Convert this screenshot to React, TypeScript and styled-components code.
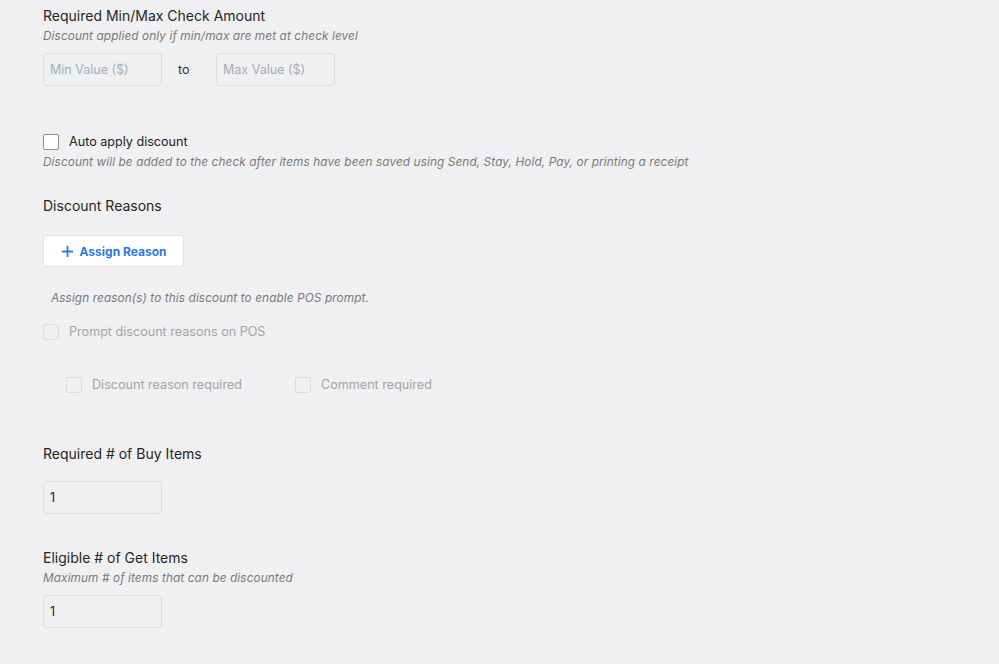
import React from 'react';
import styled, { createGlobalStyle } from 'styled-components';

const GlobalStyle = createGlobalStyle`
  html, body {
    margin: 0;
    padding: 0;
    background: #f0f0f2;
    font-family: Inter, Roboto, "Liberation Sans", Arial, sans-serif;
    color: #262626;
  }
`;

const Page = styled.div`
  padding: 6px 0 0 43px;
  min-height: 664px;
  box-sizing: border-box;
`;

const Section = styled.section<{ $gap?: number }>`
  margin-bottom: ${(p) => p.$gap ?? 0}px;
`;

const Title = styled.h3`
  margin: 0;
  font-size: 14px;
  font-weight: 400;
  line-height: 20px;
  color: #262626;
`;

const Hint = styled.p<{ $indent?: number; $top?: number }>`
  margin: ${(p) => p.$top ?? 0}px 0 0;
  padding-left: ${(p) => p.$indent ?? 0}px;
  font-size: 11.8px;
  font-style: italic;
  letter-spacing: 0.1px;
  line-height: 20px;
  color: #7a7a7a;
`;

const Row = styled.div<{ $top?: number }>`
  display: flex;
  align-items: center;
  margin-top: ${(p) => p.$top ?? 0}px;
`;

const TextInput = styled.input`
  box-sizing: border-box;
  width: 119px;
  height: 33px;
  padding: 0 6px;
  border: 1px solid #dddde0;
  border-radius: 3px;
  background: #f0f0f2;
  font-family: inherit;
  font-size: 12.5px;
  color: #222;
  outline: none;

  &::placeholder {
    color: #a3aebd;
  }
`;

const To = styled.span`
  width: 38px;
  padding-left: 16px;
  font-size: 12.5px;
  color: #333;
`;

const CheckRow = styled.label<{ $disabled?: boolean }>`
  display: flex;
  width: fit-content;
  align-items: center;
  gap: 10px;
  height: 16px;
  font-size: 12.6px;
  line-height: 16px;
  color: ${(p) => (p.$disabled ? '#a4a4a4' : '#222')};
`;

const Box = styled.span<{ $disabled?: boolean }>`
  box-sizing: border-box;
  width: 16px;
  height: 16px;
  border: 1px solid ${(p) => (p.$disabled ? '#dcdcde' : '#8d8d8d')};
  border-radius: 2px;
  background: ${(p) => (p.$disabled ? '#f0f0f2' : '#fff')};
`;

const SubChecks = styled.div`
  display: flex;
  gap: 53px;
  padding-left: 23px;
  margin-top: 37px;
`;

const AssignButton = styled.button`
  display: inline-flex;
  align-items: center;
  justify-content: center;
  gap: 6px;
  box-sizing: border-box;
  width: 141px;
  height: 32px;
  border: 1px solid #e3e3e6;
  border-radius: 3px;
  background: #fff;
  color: #2a7be4;
  font-family: inherit;
  font-size: 12px;
  font-weight: 700;
  cursor: pointer;
`;

const Checkbox = ({ label, disabled }: { label: string; disabled?: boolean }) => (
  <CheckRow $disabled={disabled}>
    <Box $disabled={disabled} />
    {label}
  </CheckRow>
);

const App = () => {
  return (
    <>
      <GlobalStyle />
      <Page>
        <Section $gap={48}>
          <Title>Required Min/Max Check Amount</Title>
          <Hint>Discount applied only if min/max are met at check level</Hint>
          <Row $top={7}>
            <TextInput placeholder="Min Value ($)" />
            <To>to</To>
            <TextInput placeholder="Max Value ($)" />
          </Row>
        </Section>

        <Section $gap={24}>
          <Checkbox label="Auto apply discount" />
          <Hint $top={2}>
            Discount will be added to the check after items have been saved using Send, Stay, Hold, Pay, or printing a receipt
          </Hint>
        </Section>

        <Section $gap={51}>
          <Title>Discount Reasons</Title>
          <Row $top={19}>
            <AssignButton>
              <svg width="13" height="13" viewBox="0 0 13 13">
                <path d="M6.5 1v11M1 6.5h11" stroke="#2a7be4" strokeWidth="1.8" />
              </svg>
              Assign Reason
            </AssignButton>
          </Row>
          <Hint $indent={8} $top={21}>
            Assign reason(s) to this discount to enable POS prompt.
          </Hint>
          <Row $top={16}>
            <Checkbox label="Prompt discount reasons on POS" disabled />
          </Row>
          <SubChecks>
            <Checkbox label="Discount reason required" disabled />
            <Checkbox label="Comment required" disabled />
          </SubChecks>
        </Section>

        <Section $gap={34}>
          <Title>Required # of Buy Items</Title>
          <Row $top={17}>
            <TextInput defaultValue="1" />
          </Row>
        </Section>

        <Section>
          <Title>Eligible # of Get Items</Title>
          <Hint>Maximum # of items that can be discounted</Hint>
          <Row $top={7}>
            <TextInput defaultValue="1" />
          </Row>
        </Section>
      </Page>
    </>
  );
};

export default App;
